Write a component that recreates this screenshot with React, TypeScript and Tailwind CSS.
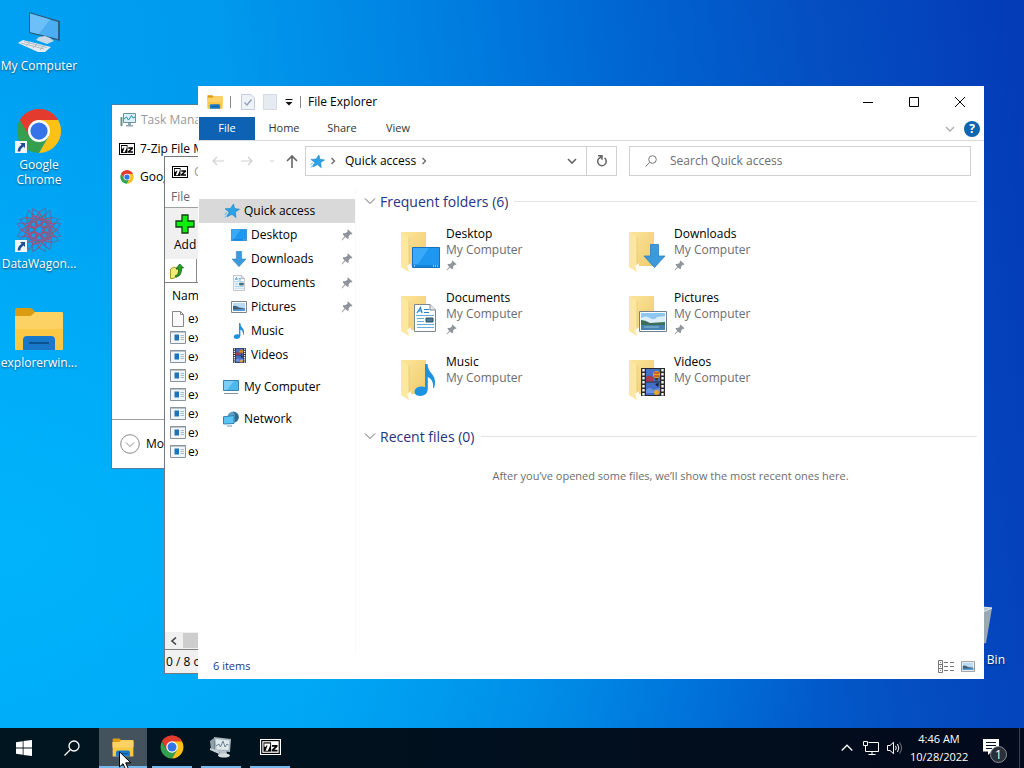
import type { ReactNode } from "react";

type IconProps = { className?: string };

function ChromeIcon({ className }: IconProps) {
  return (
    <svg viewBox="0 0 48 48" className={className} aria-hidden="true">
      <path d="M24 24 L4.1 12.5 A23 23 0 0 1 43.9 12.5 Z" fill="#ea4335" />
      <path d="M4.1 12.5 A23 23 0 0 0 24 47 L34 29.8 L24 24 L14 29.8 Z" fill="#34a04f" />
      <path d="M43.9 12.5 A23 23 0 0 1 24 47 L34 29.8 L24 12.5 Z" fill="#fbc116" />
      <path d="M24 12.5 H43.9 A23 23 0 0 0 4.1 12.5 L14 29.8 Z" fill="#e33b2e" />
      <circle cx="24" cy="24" r="11.5" fill="#fff" />
      <circle cx="24" cy="24" r="9" fill="#3474e8" />
    </svg>
  );
}

function ExplorerIcon({ className }: IconProps) {
  return (
    <svg viewBox="0 0 48 44" className={className} aria-hidden="true">
      <path d="M0 3 Q0 1 2 1 H15 Q17 1 20 5 H46 Q48 5 48 7 V20 H0 Z" fill="#dc9c12" />
      <path d="M0 9 H15 Q17 9 20 5 H46 Q48 5 48 7 V42 Q48 43 47 43 H1 Q0 43 0 42 Z" fill="#fbc845" />
      <path d="M0 9 H15 Q17 9 20 5 H46 Q48 5 48 7 V22 H0 Z" fill="#fdd264" />
      <path d="M8 43 V33 Q8 29 12 29 H36 Q40 29 40 33 V43 Z" fill="#1878ca" />
      <path d="M14 35 H34 V37 H14 Z" fill="#0b5290" />
    </svg>
  );
}

function SevenZipIcon({ className }: IconProps) {
  return (
    <svg viewBox="0 0 32 24" className={className} aria-hidden="true">
      <path d="M0 0 H32 V24 H0 Z" fill="#000" />
      <path d="M2 2 H30 V22 H2 Z" fill="#fff" />
      <path d="M4 4 H17 V20 H4 Z" fill="#000" />
      <path d="M5.5 6 H15.5 V9.5 L11.5 18.5 H7.5 L11 9.5 H8.5 V11.5 H5.5 Z" fill="#fff" />
      <path d="M18.5 8.5 H28 V11.5 L22.5 16.5 H28 V19.5 H18 V16.5 L23.5 11.5 H18.5 Z" fill="#000" />
    </svg>
  );
}

function PinIcon({ className }: IconProps) {
  return (
    <svg viewBox="0 0 12 12" className={className} aria-hidden="true">
      <path d="M7 0.5 L11.5 4.5 L10.5 5.5 L9.5 5.2 L7.8 7 L7.5 9.5 L6.5 10 L4.4 8.1 L1 11.5 L0.5 11 L3.6 7.3 L1.5 5.3 L2.3 4.3 L4.8 4 L6.6 2.4 L6.2 1.4 Z" fill="#8f959b" />
    </svg>
  );
}

function StarIcon({ className }: IconProps) {
  return (
    <svg viewBox="0 0 16 16" className={className} aria-hidden="true">
      <path d="M9.5 1 L10.6 5.6 L15.5 6.3 L11.4 9.1 L12 14.6 L8 11.3 L3 13.8 L5.1 9 L1 5.8 L6.5 5.4 Z" fill="#2ba3e6" stroke="#1c7fc2" strokeWidth="0.6" />
      <path d="M1 14.5 L4.5 10.5 M0.5 11.5 L3 9.5" stroke="#4ab3ea" strokeWidth="1" />
    </svg>
  );
}

function ScreenIcon({ className }: IconProps) {
  return (
    <svg viewBox="0 0 28 21" className={className} aria-hidden="true">
      <path d="M0.5 0.5 H27.5 V20.5 H0.5 Z" fill="#1d97f0" stroke="#1272bb" />
      <path d="M1 1 H17 L6 17 H1 Z" fill="#39a9f8" />
      <path d="M1 18 H27 V20 H1 Z" fill="#1583d6" />
      <path d="M2 19 H3 M21 19 H22 M23 19 H24 M25 19 H26" stroke="#fff" />
    </svg>
  );
}

function DownIcon({ className }: IconProps) {
  return (
    <svg viewBox="0 0 22 24" className={className} aria-hidden="true">
      <path d="M7 0.5 H15 V12 H21.5 L11 23.5 L0.5 12 H7 Z" fill="#3c99dc" stroke="#2a80c2" strokeWidth="0.8" />
    </svg>
  );
}

function DocIcon({ className }: IconProps) {
  return (
    <svg viewBox="0 0 22 28" className={className} aria-hidden="true">
      <path d="M0.5 0.5 H16 L21.5 6 V27.5 H0.5 Z" fill="#fff" stroke="#7d8790" />
      <path d="M16 0.5 V6 H21.5" fill="#e6eaee" stroke="#7d8790" />
      <path d="M3 9 L6.5 3.5 L8 9 M4.5 7 H7.5 M10 5.5 H15 M10 8.5 H15" fill="none" stroke="#2585c8" strokeWidth="1.2" />
      <path d="M2 11.5 H20 M3 14.5 H10 M3 17.5 H10 M3 20.5 H20 M3 23.5 H20" stroke="#68aedb" />
      <path d="M12 14 H19 V18 H12 Z" fill="#4b7d90" stroke="#27526a" />
    </svg>
  );
}

function PhotoIcon({ className }: IconProps) {
  return (
    <svg viewBox="0 0 28 21" className={className} aria-hidden="true">
      <path d="M0.5 0.5 H27.5 V20.5 H0.5 Z" fill="#fff" stroke="#6f7f8c" />
      <path d="M2 2 H26 V19 H2 Z" fill="#8ec6f0" />
      <path d="M2 7 Q7 4 11 7 T18 6 L26 5 V12 H2 Z" fill="#dceefa" />
      <path d="M2 9 Q6 9 11 12 L26 11 V14 H2 Z" fill="#3d6e58" />
      <path d="M2 14 H26 V19 H2 Z" fill="#4683b0" />
      <path d="M5 16 H20" stroke="#8fc0da" />
    </svg>
  );
}

// monochrome-ish landscape used at small sizes
function SmallPhotoIcon({ className }: IconProps) {
  return (
    <svg viewBox="0 0 16 12" className={className} aria-hidden="true">
      <path d="M0.5 0.5 H15.5 V11.5 H0.5 Z" fill="#fff" stroke="#7c868f" />
      <path d="M2 2 H14 V10 H2 Z" fill="#b9daf4" />
      <path d="M2 5 Q5 4 8 6.5 L14 7.5 V10 H2 Z" fill="#3f5f78" />
      <path d="M2 8.5 L14 8 V10 H2 Z" fill="#5b9bd0" />
    </svg>
  );
}

function MusicIcon({ className }: IconProps) {
  return (
    <svg viewBox="0 0 22 32" className={className} aria-hidden="true">
      <path d="M11 0 H13.5 Q14 6 18 10 Q23 16 20 24 H19 Q20 16 13.8 13 V25 Q13.5 31 7 32 Q0.5 32 0.5 27.5 Q1 23 7 22.5 Q9.5 22.3 11 23.2 Z" fill="#1c93e0" />
    </svg>
  );
}

function FilmIcon({ className }: IconProps) {
  return (
    <svg viewBox="0 0 24 28" className={className} aria-hidden="true">
      <path d="M0 0 H24 V28 H0 Z" fill="#27292e" />
      <path d="M5 1 H19 V13.5 H5 Z M5 14.5 H19 V27 H5 Z" fill="#456ec6" />
      <path d="M5 9 Q9 6 13 10 L12 13.5 H5 Z" fill="#a7394b" />
      <circle cx="15.5" cy="6.5" r="3.5" fill="#efa51d" />
      <path d="M13 5 H18 M13 8 H18" stroke="#982425" />
      <path d="M14 10 H17 L16.5 12.5 H14.5 Z" fill="#51300f" />
      <path d="M14 16 L18 15 L17 19 Z" fill="#151d2c" />
      <path d="M5 22 Q9 18 12 22 L19 20 V25 H5 Z" fill="#6b91dc" />
      <circle cx="15.5" cy="24.5" r="2.5" fill="#e9a71f" />
      <path d="M2.5 1 V28 M21.5 1 V28" stroke="#f4f4f4" strokeWidth="2.4" strokeDasharray="2.4 1.6" />
    </svg>
  );
}

function MonitorIcon({ className }: IconProps) {
  return (
    <svg viewBox="0 0 16 16" className={className} aria-hidden="true">
      <path d="M0.5 1.5 H15.5 V11.5 H0.5 Z" fill="#4db8ee" stroke="#3b82ac" />
      <path d="M1 2 H11 L4 11 H1 Z" fill="#7ccdf6" />
      <path d="M1 14.5 H15" stroke="#8197a5" />
    </svg>
  );
}

function NetworkIcon({ className }: IconProps) {
  return (
    <svg viewBox="0 0 16 16" className={className} aria-hidden="true">
      <circle cx="10.2" cy="6" r="5.6" fill="#5f9fc6" />
      <path d="M10 0.5 Q16 2 15.7 7 Q15 10 12 11.3 V4 Z" fill="#316a90" />
      <path d="M0.5 5.8 L11 4.5 V12.5 L0.5 13 Z" fill="#5ac4f2" stroke="#2e80b2" />
      <path d="M4 15 H9" stroke="#6d97b0" />
    </svg>
  );
}

function TaskManagerIcon({ className }: IconProps) {
  return (
    <svg viewBox="0 0 16 14" className={className} aria-hidden="true">
      <path d="M3.5 0.5 H15.5 V9.5 H3.5 Z" fill="#d8f0f8" stroke="#70909e" />
      <path d="M4 6 L6.5 4 L8.5 7 L11.5 2.5 L13 5 L15 4" fill="none" stroke="#2990b5" />
      <path d="M8 10 H11 V12 H13 V13.5 H6 V12 H8 Z" fill="#91a8b1" />
      <path d="M0.5 4 H2.5 V13 H0.5 Z" fill="#6c9486" />
    </svg>
  );
}

function ComputerIcon({ className }: IconProps) {
  return (
    <svg viewBox="0 0 44 44" className={className} aria-hidden="true">
      <path d="M12 2 L43 11 V31 L12 23 Z" fill="#2e5d80" />
      <path d="M13 3.5 L41 12 V29 L13 22 Z" fill="#4badf2" />
      <path d="M13 3.5 L33 9.6 L22 24 L13 22 Z" fill="#6cc0f7" />
      <path d="M19 30 L22 27 L28 26 L33 28 L37 31 L30 34 Z" fill="#c8dae6" />
      <path d="M1 33 L6 30 L34 37 L28 42 L21 42 Z" fill="#e6ebef" />
      <path d="M4 33 L27 39 M7 31.5 L30 37.5 M9 36 L14 31 M16 38 L21 33 M23 40 L27 35" stroke="#9fadb8" strokeWidth="0.8" />
    </svg>
  );
}

function MandalaIcon({ className }: IconProps) {
  const petals = [0, 45, 90, 135, 180, 225, 270, 315];
  return (
    <svg viewBox="0 0 44 44" className={className} aria-hidden="true">
      <g fill="none" strokeWidth="1.1">
        {petals.map((a) => (
          <g key={a} transform={`rotate(${a} 22 22)`}>
            <path d="M22 12 L28.5 7 L28 1.5 L22 5 L16 1.5 L15.5 7 Z" stroke="#4f74b4" />
            <path d="M22 19 L27 13 L22 5 L17 13 Z" stroke="#a34f74" />
            <path d="M18 17 L22 9 L26 17 M15 7 L22 12 L29 7" stroke="#8a5a86" />
          </g>
        ))}
        <circle cx="22" cy="22" r="5" stroke="#a34f74" />
        <circle cx="22" cy="22" r="9.5" stroke="#7a639a" />
      </g>
    </svg>
  );
}

function ShortcutArrow() {
  return (
    <svg viewBox="0 0 12 12" className="absolute bottom-0 left-0 size-3" aria-hidden="true">
      <path d="M0 0 H12 V12 H0 Z" fill="#f2f6fa" />
      <path d="M5 2 H10 V7 L8.4 5.5 Q5.5 7.5 5.2 10.5 H2.6 Q2.6 6.5 6.6 3.7 Z" fill="#1d4f94" />
    </svg>
  );
}

function AppFileIcon() {
  return (
    <svg viewBox="0 0 16 13" className="h-[13px] w-4" aria-hidden="true">
      <path d="M0.5 0.5 H15.5 V12.5 H0.5 Z" fill="#f3f6f8" stroke="#87949e" />
      <path d="M0 1 H16" stroke="#87949e" />
      <path d="M4.5 3.5 H9 V9.5 H4.5 Z" fill="#1f74b8" />
      <path d="M10.5 4.5 H14 M10.5 6.5 H14 M10.5 8.5 H14" stroke="#a9bac6" />
    </svg>
  );
}

function Folder({ children }: { children: ReactNode }) {
  return (
    <div className="relative h-12 w-10 shrink-0">
      <svg viewBox="0 0 40 48" className="h-12 w-10" aria-hidden="true">
        <defs>
          <linearGradient id="folderBack" x1="0" y1="0" x2="1" y2="1">
            <stop offset="0" stopColor="#fbe59c" />
            <stop offset="1" stopColor="#f0cb6c" />
          </linearGradient>
        </defs>
        <path d="M1 7 H26 V41 H8 Z" fill="url(#folderBack)" />
        <path d="M1 7 L9 12 V47 L1 42 Z" fill="#fbe6a2" />
        <path d="M9 12 V41" stroke="#e8c877" strokeWidth="0.8" />
        <path d="M7 41 L11 38 V43 L9 47 Z" fill="#fffaf0" />
      </svg>
      {children}
    </div>
  );
}

const folders = [
  { name: "Desktop", pinned: true, icon: <ScreenIcon className="absolute right-0 bottom-[5px] h-[21px] w-7" /> },
  { name: "Downloads", pinned: true, icon: <DownIcon className="absolute right-[2px] bottom-[5px] h-6 w-[23px]" /> },
  { name: "Documents", pinned: true, icon: <DocIcon className="absolute right-1 bottom-[5px] h-7 w-[22px]" /> },
  { name: "Pictures", pinned: true, icon: <PhotoIcon className="absolute right-px bottom-[5px] h-[21px] w-7" /> },
  { name: "Music", pinned: false, icon: <MusicIcon className="absolute right-1 bottom-[5px] h-8 w-[22px]" /> },
  { name: "Videos", pinned: false, icon: <FilmIcon className="absolute right-[3px] bottom-[5px] h-7 w-6" /> },
];

const places = [
  { name: "Desktop", pinned: true, icon: <ScreenIcon className="h-3 w-4" /> },
  { name: "Downloads", pinned: true, icon: <DownIcon className="h-4 w-4" /> },
  { name: "Documents", pinned: true, icon: <DocIcon className="h-4 w-3" /> },
  { name: "Pictures", pinned: true, icon: <SmallPhotoIcon className="h-3 w-4" /> },
  { name: "Music", pinned: false, icon: <MusicIcon className="h-4 w-3" /> },
  { name: "Videos", pinned: false, icon: <FilmIcon className="h-[15px] w-[13px]" /> },
];

function DesktopItem({ label, shortcut, children }: { label: string; shortcut?: boolean; children: ReactNode }) {
  return (
    <button className="flex h-[99px] w-full flex-col items-center gap-1 text-center leading-[15px] text-white [text-shadow:0_1px_2px_#0008]">
      <span className="relative flex h-11 w-[48px] items-center justify-center">
        {children}
        {shortcut && <ShortcutArrow />}
      </span>
      <span>{label}</span>
    </button>
  );
}

function TaskManager() {
  return (
    <section aria-label="Task Manager" className="absolute top-[104px] left-[111px] flex h-[365px] w-80 flex-col border border-[#4c7f9f] bg-white">
      <header className="flex h-[30px] items-center gap-[5px] pl-2 text-[#999]">
        <TaskManagerIcon className="h-[14px] w-4" />
        <span>Task Manager</span>
      </header>
      <ul className="grow">
        <li className="flex h-7 items-center gap-[5px] pl-[7px]">
          <SevenZipIcon className="h-3 w-4" />
          7-Zip File Manager
        </li>
        <li className="flex h-7 items-center gap-[6px] pl-2">
          <ChromeIcon className="size-[14px]" />
          Google Chrome
        </li>
      </ul>
      <footer className="flex h-[49px] items-center border-t border-[#a0a0a0] pl-2">
        <button className="flex items-center gap-[6px]">
          <svg viewBox="0 0 20 20" className="size-5" fill="none" stroke="#888" aria-hidden="true">
            <circle cx="10" cy="10" r="9.3" />
            <path d="M6 8.5 L10 12.5 L14 8.5" />
          </svg>
          More details
        </button>
      </footer>
    </section>
  );
}

function SevenZip() {
  return (
    <section aria-label="7-Zip" className="absolute top-[156px] bottom-[54px] left-[164px] flex w-[440px] flex-col border border-[#707880] bg-white">
      <header className="flex h-[29px] items-center gap-[6px] pl-[7px] text-[#999]">
        <SevenZipIcon className="h-3 w-4" />
        <span>C:\</span>
      </header>
      <nav className="flex h-[22px] items-center border-b border-[#a0a0a0] pl-[6px] text-[#666]">
        <button>File</button>
      </nav>
      <div className="flex h-[51px] bg-[#f0f0f0] pl-[9px]">
        <button className="flex flex-col items-center gap-[2px] pt-[6px]">
          <svg viewBox="0 0 20 20" className="size-5" aria-hidden="true">
            <path d="M7 1 H13 V7 H19 V13 H13 V19 H7 V13 H1 V7 H7 Z" fill="#0cf00c" stroke="#123f12" strokeWidth="1.3" />
          </svg>
          Add
        </button>
      </div>
      <div className="flex h-6 items-center border-b border-[#808080] pl-[5px]">
        <button aria-label="Up one folder" className="flex h-6 w-[27px] items-center border-r border-[#888]">
          <svg viewBox="0 0 14 16" className="h-4 w-[14px]" aria-hidden="true">
            <path d="M0.5 6 L4 4 L6 5 L10 4 V12 L3 15.5 H0.5 Z" fill="#f3e97b" stroke="#a09a28" />
            <path d="M5 13 Q9 12 8.5 6 H6 L9.7 1 L13.5 5 H11.5 Q12 12 6.5 14 Z" fill="#23a223" stroke="#125b18" strokeWidth="0.8" />
          </svg>
        </button>
      </div>
      <div className="grow overflow-hidden">
        <div className="flex h-[26px] items-center pl-[7px]">Name</div>
        <ul>
          {[0, 1, 2, 3, 4, 5, 6, 7].map((i) => (
            <li key={i} className="flex h-[19px] items-center gap-[2px] pl-[5px]">
              {i === 0 ? (
                <svg viewBox="0 0 16 16" className="size-4" fill="#fafafa" stroke="#888" aria-hidden="true">
                  <path d="M2.5 0.5 H10.5 L13.5 3.5 V15.5 H2.5 Z M10.5 0.5 V3.5 H13.5" />
                </svg>
              ) : (
                <AppFileIcon />
              )}
              explorer
            </li>
          ))}
        </ul>
      </div>
      <div className="flex h-[18px] items-center border-b border-[#808080] bg-[#f0f0f0]">
        <button aria-label="Scroll left" className="flex h-full w-[18px] items-center justify-center">
          <svg viewBox="0 0 8 8" className="size-2" fill="none" stroke="#444" strokeWidth="1.6" aria-hidden="true">
            <path d="M6 0.5 L2 4 L6 7.5" />
          </svg>
        </button>
        <div className="h-[15px] w-40 bg-[#cdcdcd]" />
      </div>
      <footer className="flex h-[23px] items-center bg-[#f0f0f0] pt-px pl-px">0 / 8 object(s)</footer>
    </section>
  );
}

function SectionTitle({ children }: { children: string }) {
  return (
    <div className="flex h-[22px] items-center gap-[6px]">
      <h2 className="flex items-center gap-1 text-[14px] text-[#26347f]">
        <svg viewBox="0 0 12 12" className="size-3" fill="none" stroke="#666" aria-hidden="true">
          <path d="M1 3.5 L6 8.5 L11 3.5" />
        </svg>
        {children}
      </h2>
      <div className="h-px grow bg-[#e2e2e2]" />
    </div>
  );
}

function Explorer() {
  return (
    <main className="absolute top-[86px] right-10 bottom-[49px] left-[198px] flex flex-col bg-white">
      <header className="flex h-[31px] items-center pr-px">
        <ExplorerIcon className="ml-[9px] h-[14px] w-4" />
        <div className="ml-[7px] h-3 w-px bg-[#888]" />
        <svg viewBox="0 0 14 16" className="ml-[10px] h-4 w-[14px]" aria-hidden="true">
          <path d="M0.5 0.5 H10 L13.5 4 V15.5 H0.5 Z" fill="#eef3f9" stroke="#c3ccd8" />
          <path d="M3.5 8.5 L6 11 L10.5 5.5" fill="none" stroke="#8fa1b5" strokeWidth="1.3" />
        </svg>
        <svg viewBox="0 0 14 16" className="ml-2 h-4 w-[14px]" aria-hidden="true">
          <path d="M0.5 0.5 H13.5 V15.5 H0.5 Z" fill="#e6ebf2" stroke="#d3dae3" />
        </svg>
        <svg viewBox="0 0 8 8" className="ml-2 size-2" aria-hidden="true">
          <path d="M0.5 1 H7.5 V2 H0.5 Z M0.5 4 H7.5 L4 7.5 Z" fill="#111" />
        </svg>
        <div className="ml-[7px] h-3 w-px bg-[#888]" />
        <h1 className="ml-[7px] grow">File Explorer</h1>
        <button aria-label="Minimize" className="flex h-full w-[46px] items-center justify-center">
          <svg viewBox="0 0 10 10" className="size-[10px]" stroke="#000" fill="none" aria-hidden="true">
            <path d="M0 5.5 H10" />
          </svg>
        </button>
        <button aria-label="Maximize" className="flex h-full w-[46px] items-center justify-center">
          <svg viewBox="0 0 10 10" className="size-[10px]" stroke="#000" fill="none" aria-hidden="true">
            <path d="M0.5 0.5 H9.5 V9.5 H0.5 Z" />
          </svg>
        </button>
        <button aria-label="Close" className="flex h-full w-[46px] items-center justify-center">
          <svg viewBox="0 0 10 10" className="size-[10px]" stroke="#000" fill="none" aria-hidden="true">
            <path d="M0 0 L10 10 M10 0 L0 10" />
          </svg>
        </button>
      </header>

      <nav className="flex h-6 items-center border-b border-[#dadbdc] pl-px text-[11px] text-[#333]">
        <button className="h-full w-14 bg-[#0d62b4] text-white">File</button>
        <button className="h-full w-[58px]">Home</button>
        <button className="h-full w-[58px]">Share</button>
        <button className="h-full w-[54px]">View</button>
        <div className="grow" />
        <button aria-label="Expand the Ribbon" className="mr-[9px]">
          <svg viewBox="0 0 10 10" className="size-[10px]" stroke="#aaa" strokeWidth="1.3" fill="none" aria-hidden="true">
            <path d="M1 3 L5 7 L9 3" />
          </svg>
        </button>
        <button aria-label="Help" className="mr-1 flex size-4 items-center justify-center rounded-full bg-[#0f65b0] text-[12px] leading-4 font-bold text-white">
          ?
        </button>
      </nav>

      <div className="mt-[5px] flex h-[30px] items-center pr-[13px]">
        <button aria-label="Back" className="ml-3">
          <svg viewBox="0 0 16 16" className="size-4" stroke="#cfcfcf" strokeWidth="1.2" fill="none" aria-hidden="true">
            <path d="M14 8 H3 M7 4 L3 8 L7 12" />
          </svg>
        </button>
        <button aria-label="Forward" className="ml-[13px]">
          <svg viewBox="0 0 16 16" className="size-4" stroke="#cfcfcf" strokeWidth="1.2" fill="none" aria-hidden="true">
            <path d="M2 8 H13 M9 4 L13 8 L9 12" />
          </svg>
        </button>
        <button aria-label="Recent locations" className="ml-[14px]">
          <svg viewBox="0 0 6 6" className="size-[6px]" stroke="#ccc" fill="none" aria-hidden="true">
            <path d="M1 2 L3 4 L5 2" />
          </svg>
        </button>
        <button aria-label="Up" className="ml-[9px]">
          <svg viewBox="0 0 16 16" className="size-4" stroke="#666" strokeWidth="1.6" fill="none" aria-hidden="true">
            <path d="M8 15 V3 M3 8 L8 3 L13 8" />
          </svg>
        </button>
        <div className="ml-[5px] flex h-full grow basis-0 items-center border border-[#d0d0d0]">
          <StarIcon className="ml-1 size-[15px]" />
          <svg viewBox="0 0 6 8" className="ml-[5px] h-2 w-[6px]" stroke="#666" strokeWidth="1.3" fill="none" aria-hidden="true">
            <path d="M1.5 1 L4.5 4 L1.5 7" />
          </svg>
          <button className="ml-[9px]">Quick access</button>
          <svg viewBox="0 0 6 8" className="ml-[5px] h-2 w-[6px]" stroke="#666" strokeWidth="1.3" fill="none" aria-hidden="true">
            <path d="M1.5 1 L4.5 4 L1.5 7" />
          </svg>
          <div className="grow" />
          <button aria-label="Previous locations" className="mr-[9px]">
            <svg viewBox="0 0 10 10" className="size-[10px]" stroke="#666" strokeWidth="1.6" fill="none" aria-hidden="true">
              <path d="M1 3 L5 7 L9 3" />
            </svg>
          </button>
          <button aria-label="Refresh" className="flex h-full w-[30px] items-center justify-center border-l border-[#d0d0d0]">
            <svg viewBox="0 0 12 12" className="size-3" stroke="#666" strokeWidth="1.5" fill="none" aria-hidden="true">
              <path d="M3 3.2 A4.3 4.3 0 1 0 8.5 2.9 M2 0.8 H6 V4.8 M6 1.5 L3 3.4" />
            </svg>
          </button>
        </div>
        <label className="ml-3 flex h-full w-[342px] items-center gap-[13px] border border-[#d0d0d0] pl-[15px]">
          <svg viewBox="0 0 12 12" className="size-3 shrink-0" stroke="#777" fill="none" aria-hidden="true">
            <circle cx="7.5" cy="4.5" r="3.8" />
            <path d="M4.8 7.3 L0.5 11.5" />
          </svg>
          <input
            type="search"
            aria-label="Search Quick access"
            placeholder="Search Quick access"
            className="w-full min-w-0 outline-none placeholder:text-[#6d6d6d]"
          />
        </label>
      </div>

      <div className="flex min-h-0 grow pt-[14px]">
        <nav className="flex w-[158px] shrink-0 flex-col gap-2 border-r border-[#f9f9f9] pl-px">
          <ul className="pt-[9px]">
            <li>
              <button className="flex h-6 w-full items-center gap-1 bg-[#d9d9d9] pl-[25px]">
                <StarIcon className="size-4" />
                Quick access
              </button>
            </li>
            {places.map((p) => (
              <li key={p.name}>
                <button className="flex h-6 w-full items-center pr-[2px] pl-8">
                  <span className="mr-1 flex w-4 justify-center">{p.icon}</span>
                  <span className="grow text-left">{p.name}</span>
                  {p.pinned && <PinIcon className="size-3" />}
                </button>
              </li>
            ))}
          </ul>
          <button className="flex h-6 items-center gap-[5px] pl-6">
            <MonitorIcon className="size-4" />
            My Computer
          </button>
          <button className="flex h-6 items-center gap-[5px] pl-6">
            <NetworkIcon className="size-4" />
            Network
          </button>
        </nav>

        <div className="flex grow flex-col pr-[7px] pl-2">
          <SectionTitle>Frequent folders (6)</SectionTitle>
          <ul className="mt-[13px] ml-9 grid w-[456px] grid-cols-2">
            {folders.map((f) => (
              <li key={f.name} className="flex h-16 gap-[6px]">
                <Folder>{f.icon}</Folder>
                <div className="pt-px leading-4">
                  <p>{f.name}</p>
                  <p className="text-[#6d6d6d]">My Computer</p>
                  {f.pinned && <PinIcon className="mt-[2px] size-[11px]" />}
                </div>
              </li>
            ))}
          </ul>
          <div className="mt-2">
            <SectionTitle>Recent files (0)</SectionTitle>
          </div>
          <p className="mt-[21px] text-center text-[11px] leading-4 text-[#6d6d6d]">
            After you’ve opened some files, we’ll show the most recent ones here.
          </p>
        </div>
      </div>

      <footer className="flex h-[25px] items-center pr-[9px] pl-[15px] text-[#26347f]">
        <span className="grow text-[11px]">6 items</span>
        <button aria-label="Details view" className="mr-[6px]">
          <svg viewBox="0 0 17 13" className="h-[13px] w-[17px]" stroke="#777" fill="none" aria-hidden="true">
            <path d="M0.5 0.5 H4.5 V12.5 H0.5 Z M0.5 4.5 H4.5 M0.5 8.5 H4.5" />
            <path d="M6 2.5 H10 M12 2.5 H16 M6 6.5 H10 M12 6.5 H16 M6 10.5 H10 M12 10.5 H16 M2 2.5 H3 M2 6.5 H3 M2 10.5 H3" />
          </svg>
        </button>
        <button aria-label="Large icons view">
          <SmallPhotoIcon className="h-[11px] w-[14px]" />
        </button>
      </footer>
    </main>
  );
}

function TaskbarApp({ label, active, children }: { label: string; active?: boolean; children: ReactNode }) {
  return (
    <button
      aria-label={label}
      className={
        active
          ? "relative flex h-full w-12 items-center justify-center border-b-2 border-[#76b9ed] bg-[#43525c]"
          : "mx-1 flex h-full w-10 items-center justify-center border-b-2 border-[#76b9ed]"
      }
    >
      {children}
    </button>
  );
}

function Taskbar() {
  return (
    <footer className="flex h-10 shrink-0 items-center bg-linear-to-r from-[#00151f] to-[#020a1c] text-white">
      <button aria-label="Start" className="flex h-full w-12 items-center justify-center">
        <svg viewBox="0 0 16 16" className="size-4" fill="#fff" aria-hidden="true">
          <path d="M0 2.2 L6.7 1.2 V7.5 H0 Z M7.5 1.1 L16 0 V7.5 H7.5 Z M0 8.4 H6.7 V14.8 L0 13.8 Z M7.5 8.4 H16 V16 L7.5 14.9 Z" />
        </svg>
      </button>
      <button aria-label="Search" className="mr-[3px] flex h-full w-12 items-center justify-center">
        <svg viewBox="0 0 16 16" className="size-4" fill="none" stroke="#fff" strokeWidth="1.3" aria-hidden="true">
          <circle cx="10" cy="6" r="5" />
          <path d="M6.4 9.6 L0.5 15.5" />
        </svg>
      </button>
      <div className="flex h-full gap-px">
        <TaskbarApp label="File Explorer" active>
          <ExplorerIcon className="h-[19px] w-[22px]" />
          <svg viewBox="0 0 13 20" className="absolute top-[23px] left-5 h-5 w-[13px]" aria-hidden="true">
            <path d="M0.5 0.8 V16 L4 12.7 L6.8 19 L9.4 17.9 L6.7 11.8 H11.8 Z" fill="#fff" stroke="#000" />
          </svg>
        </TaskbarApp>
        <TaskbarApp label="Google Chrome">
          <ChromeIcon className="size-6" />
        </TaskbarApp>
        <TaskbarApp label="Task Manager">
          <svg viewBox="0 0 24 22" className="h-[22px] w-6" aria-hidden="true">
            <path d="M5 1 L22 3 L21 16 L6 15 Z" fill="#a5b6bf" />
            <path d="M6.5 3 L20.5 4.5 L19.5 14 L7.5 13.5 Z" fill="#dfe9ed" />
            <path d="M7 10 L10 8 L11.5 11 L14 5 L16 11 L18 8 L19.5 9" fill="none" stroke="#6b8391" />
            <path d="M1 5 L5 2 L6 14 L2 13 Z" fill="#8fa1a8" />
            <path d="M1 12 L11 15 L10 18 L1 14 Z" fill="#c3ced3" />
            <path d="M11 15 H17 L19 20 H9 Z" fill="#b9c5ca" />
            <ellipse cx="15" cy="19.5" rx="6" ry="2" fill="#d6dde0" />
          </svg>
        </TaskbarApp>
        <TaskbarApp label="7-Zip File Manager">
          <span className="bg-white p-px">
            <SevenZipIcon className="h-[14px] w-[19px]" />
          </span>
        </TaskbarApp>
      </div>
      <div className="grow" />
      <button aria-label="Show hidden icons">
        <svg viewBox="0 0 12 12" className="size-3" fill="none" stroke="#fff" strokeWidth="1.3" aria-hidden="true">
          <path d="M0.7 8.5 L6 3.2 L11.3 8.5" />
        </svg>
      </button>
      <button aria-label="Network" className="ml-[10px]">
        <svg viewBox="0 0 16 14" className="h-[14px] w-4" fill="none" stroke="#fff" aria-hidden="true">
          <path d="M5.5 1.5 H15.5 V10.5 H2.5 V6 M9 10.5 V13.5 M5.5 13.5 H12.5 M0.5 0.5 H4.5 V4.5 H0.5 Z M2.5 4.5 V7" />
        </svg>
      </button>
      <button aria-label="Volume" className="ml-2">
        <svg viewBox="0 0 16 14" className="h-[14px] w-4" fill="none" stroke="#fff" aria-hidden="true">
          <path d="M0.5 4.5 H3 L6.5 1.3 V12.7 L3 9.5 H0.5 Z M8.5 4.8 Q10 7 8.5 9.2 M10.5 3 Q13.2 7 10.5 11" />
          <path d="M12.6 1.5 Q16.5 7 12.6 12.5" stroke="#777" />
        </svg>
      </button>
      <div className="mx-[7px] w-[58px] text-center text-[11px] leading-[18px] whitespace-nowrap">
        <p>4:46 AM</p>
        <p>10/28/2022</p>
      </div>
      <button aria-label="Notifications" className="relative ml-2 h-full w-6">
        <svg viewBox="0 0 16 16" className="mb-[2px] size-4" aria-hidden="true">
          <path d="M0 0 H16 V12.5 H8.5 L5 16 V12.5 H0 Z" fill="#fff" />
          <path d="M3 3.5 H13 M3 6.5 H13 M3 9.5 H9" stroke="#0a1424" />
        </svg>
        <span className="absolute top-[18px] left-[7px] flex size-[17px] items-center justify-center rounded-full border border-[#8a8f96] bg-[#2b3038] text-[12px]">
          1
        </span>
      </button>
      <div className="ml-3 h-full w-[5px] border-l border-[#3a4250]" />
    </footer>
  );
}

export default function App() {
  return (
    <div className="flex h-screen flex-col overflow-hidden font-['Open_Sans','Noto_Sans',sans-serif] text-[12px] text-black">
      <div className="relative min-h-0 grow bg-[radial-gradient(ellipse_at_0%_75%,#00b6fce0,#00b6fc00_60%),linear-gradient(82deg,#00a4f4_0%,#009aee_28%,#0082e2_46%,#0066d2_64%,#0450c2_80%,#043cb8_98%)]">
        <div className="flex w-[78px] flex-col pt-[10px]">
          <DesktopItem label="My Computer">
            <ComputerIcon className="size-11" />
          </DesktopItem>
          <DesktopItem label="Google Chrome" shortcut>
            <ChromeIcon className="size-[46px]" />
          </DesktopItem>
          <DesktopItem label="DataWagon..." shortcut>
            <MandalaIcon className="size-[46px]" />
          </DesktopItem>
          <DesktopItem label="explorerwin...">
            <ExplorerIcon className="h-11 w-[48px]" />
          </DesktopItem>
        </div>

        <div className="absolute right-[19px] bottom-[59px] flex flex-col items-center gap-1 text-white [text-shadow:0_1px_2px_#0008]">
          <svg viewBox="0 0 36 44" className="h-11 w-9" aria-hidden="true">
            <path d="M2 8 L20 12 L36 5 L30 40 L18 43 L7 40 Z" fill="#9aa8b4" />
            <path d="M2 8 L17 3 L36 5 L20 12 Z" fill="#b9c6d2" stroke="#e4eaf0" />
          </svg>
          <span>Recycle Bin</span>
        </div>

        <TaskManager />
        <SevenZip />
        <Explorer />
      </div>
      <Taskbar />
    </div>
  );
}
